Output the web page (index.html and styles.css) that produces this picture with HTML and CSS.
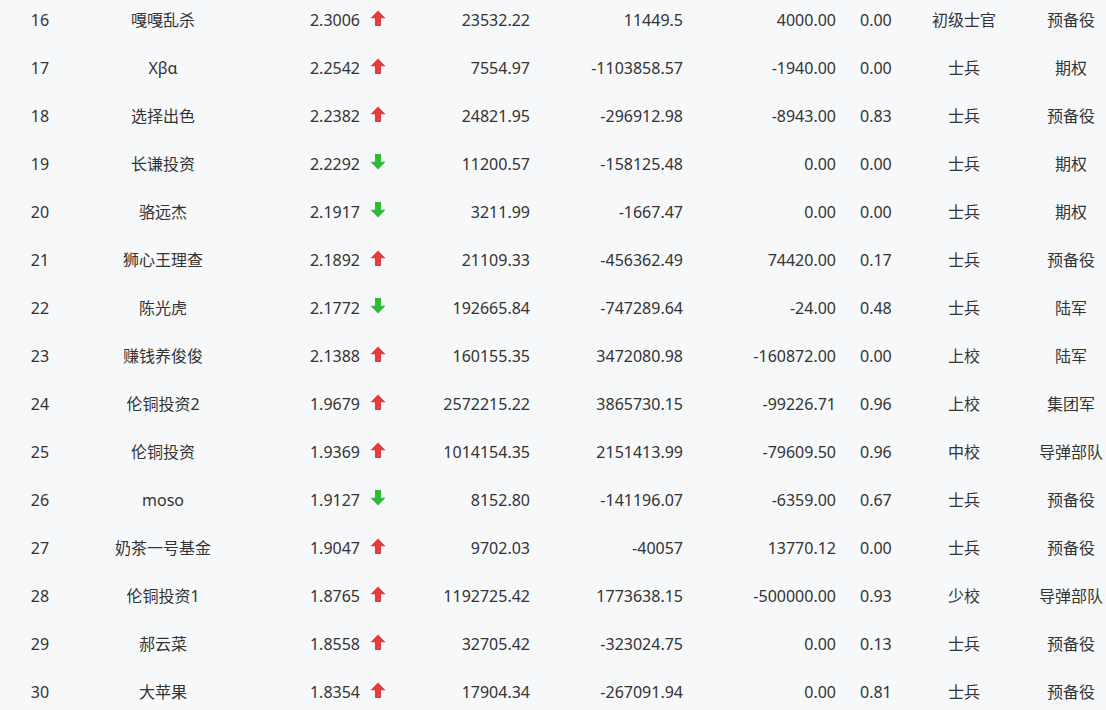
FILE: index.html
```html
<!DOCTYPE html>
<html lang="zh-CN">
<head>
<meta charset="utf-8">
<title>排行</title>
<link rel="stylesheet" href="styles.css">
</head>
<body>
<svg class="defs" width="0" height="0" aria-hidden="true">
  <defs>
    <symbol id="arrow-up" viewBox="0 0 16 16"><polygon points="8,0.5 15.5,8.2 11,8.2 11,16 5,16 5,8.2 0.5,8.2"/></symbol>
    <symbol id="arrow-down" viewBox="0 0 16 16"><polygon points="8,15.5 15.5,7.8 11,7.8 11,0 5,0 5,7.8 0.5,7.8"/></symbol>
  </defs>
</svg>
<div class="list">
  <div class="row"><span class="c rank">16</span><span class="c name">嘎嘎乱杀</span><span class="c val">2.3006<svg class="arr up"><use href="#arrow-up"/></svg></span><span class="c n4">23532.22</span><span class="c n5">11449.5</span><span class="c n6">4000.00</span><span class="c n7">0.00</span><span class="c rankname">初级士官</span><span class="c group">预备役</span></div>
  <div class="row"><span class="c rank">17</span><span class="c name">Xβα</span><span class="c val">2.2542<svg class="arr up"><use href="#arrow-up"/></svg></span><span class="c n4">7554.97</span><span class="c n5">-1103858.57</span><span class="c n6">-1940.00</span><span class="c n7">0.00</span><span class="c rankname">士兵</span><span class="c group">期权</span></div>
  <div class="row"><span class="c rank">18</span><span class="c name">选择出色</span><span class="c val">2.2382<svg class="arr up"><use href="#arrow-up"/></svg></span><span class="c n4">24821.95</span><span class="c n5">-296912.98</span><span class="c n6">-8943.00</span><span class="c n7">0.83</span><span class="c rankname">士兵</span><span class="c group">预备役</span></div>
  <div class="row"><span class="c rank">19</span><span class="c name">长谦投资</span><span class="c val">2.2292<svg class="arr down"><use href="#arrow-down"/></svg></span><span class="c n4">11200.57</span><span class="c n5">-158125.48</span><span class="c n6">0.00</span><span class="c n7">0.00</span><span class="c rankname">士兵</span><span class="c group">期权</span></div>
  <div class="row"><span class="c rank">20</span><span class="c name">骆远杰</span><span class="c val">2.1917<svg class="arr down"><use href="#arrow-down"/></svg></span><span class="c n4">3211.99</span><span class="c n5">-1667.47</span><span class="c n6">0.00</span><span class="c n7">0.00</span><span class="c rankname">士兵</span><span class="c group">期权</span></div>
  <div class="row"><span class="c rank">21</span><span class="c name">狮心王理查</span><span class="c val">2.1892<svg class="arr up"><use href="#arrow-up"/></svg></span><span class="c n4">21109.33</span><span class="c n5">-456362.49</span><span class="c n6">74420.00</span><span class="c n7">0.17</span><span class="c rankname">士兵</span><span class="c group">预备役</span></div>
  <div class="row"><span class="c rank">22</span><span class="c name">陈光虎</span><span class="c val">2.1772<svg class="arr down"><use href="#arrow-down"/></svg></span><span class="c n4">192665.84</span><span class="c n5">-747289.64</span><span class="c n6">-24.00</span><span class="c n7">0.48</span><span class="c rankname">士兵</span><span class="c group">陆军</span></div>
  <div class="row"><span class="c rank">23</span><span class="c name">赚钱养俊俊</span><span class="c val">2.1388<svg class="arr up"><use href="#arrow-up"/></svg></span><span class="c n4">160155.35</span><span class="c n5">3472080.98</span><span class="c n6">-160872.00</span><span class="c n7">0.00</span><span class="c rankname">上校</span><span class="c group">陆军</span></div>
  <div class="row"><span class="c rank">24</span><span class="c name">伦铜投资2</span><span class="c val">1.9679<svg class="arr up"><use href="#arrow-up"/></svg></span><span class="c n4">2572215.22</span><span class="c n5">3865730.15</span><span class="c n6">-99226.71</span><span class="c n7">0.96</span><span class="c rankname">上校</span><span class="c group">集团军</span></div>
  <div class="row"><span class="c rank">25</span><span class="c name">伦铜投资</span><span class="c val">1.9369<svg class="arr up"><use href="#arrow-up"/></svg></span><span class="c n4">1014154.35</span><span class="c n5">2151413.99</span><span class="c n6">-79609.50</span><span class="c n7">0.96</span><span class="c rankname">中校</span><span class="c group">导弹部队</span></div>
  <div class="row"><span class="c rank">26</span><span class="c name">moso</span><span class="c val">1.9127<svg class="arr down"><use href="#arrow-down"/></svg></span><span class="c n4">8152.80</span><span class="c n5">-141196.07</span><span class="c n6">-6359.00</span><span class="c n7">0.67</span><span class="c rankname">士兵</span><span class="c group">预备役</span></div>
  <div class="row"><span class="c rank">27</span><span class="c name">奶茶一号基金</span><span class="c val">1.9047<svg class="arr up"><use href="#arrow-up"/></svg></span><span class="c n4">9702.03</span><span class="c n5">-40057</span><span class="c n6">13770.12</span><span class="c n7">0.00</span><span class="c rankname">士兵</span><span class="c group">预备役</span></div>
  <div class="row"><span class="c rank">28</span><span class="c name">伦铜投资1</span><span class="c val">1.8765<svg class="arr up"><use href="#arrow-up"/></svg></span><span class="c n4">1192725.42</span><span class="c n5">1773638.15</span><span class="c n6">-500000.00</span><span class="c n7">0.93</span><span class="c rankname">少校</span><span class="c group">导弹部队</span></div>
  <div class="row"><span class="c rank">29</span><span class="c name">郝云菜</span><span class="c val">1.8558<svg class="arr up"><use href="#arrow-up"/></svg></span><span class="c n4">32705.42</span><span class="c n5">-323024.75</span><span class="c n6">0.00</span><span class="c n7">0.13</span><span class="c rankname">士兵</span><span class="c group">预备役</span></div>
  <div class="row"><span class="c rank">30</span><span class="c name">大苹果</span><span class="c val">1.8354<svg class="arr up"><use href="#arrow-up"/></svg></span><span class="c n4">17904.34</span><span class="c n5">-267091.94</span><span class="c n6">0.00</span><span class="c n7">0.81</span><span class="c rankname">士兵</span><span class="c group">预备役</span></div>
</div>
</body>
</html>
```
FILE: styles.css
```css
html, body {
  margin: 0;
  padding: 0;
  background: #f7f8fa;
  overflow: hidden;
}
body {
  font-family: "Noto Sans", "Noto Sans CJK SC", sans-serif;
  font-size: 16px;
  color: #333333;
}
.defs {
  position: absolute;
  width: 0;
  height: 0;
}
.list {
  margin-top: -4px;
}
.row {
  display: grid;
  grid-template-columns: 80px 166px 142px 142px 153px 153px 78px 100px 92px;
  height: 48px;
  align-items: center;
  white-space: nowrap;
}
.c {
  display: block;
  line-height: 20px;
}
.rank, .name, .rankname {
  text-align: center;
}
.val {
  display: flex;
  justify-content: flex-end;
  align-items: center;
  gap: 10px;
  padding-right: 2px;
}
.n4, .n5, .n6 {
  text-align: right;
}
.n7 {
  padding-left: 24px;
}
.group {
  text-align: center;
  padding-left: 22px;
}
.arr {
  width: 16px;
  height: 16px;
  position: relative;
  top: -2px;
}
.arr.up {
  fill: #e83a3a;
}
.arr.down {
  fill: #2fb83c;
}
```
